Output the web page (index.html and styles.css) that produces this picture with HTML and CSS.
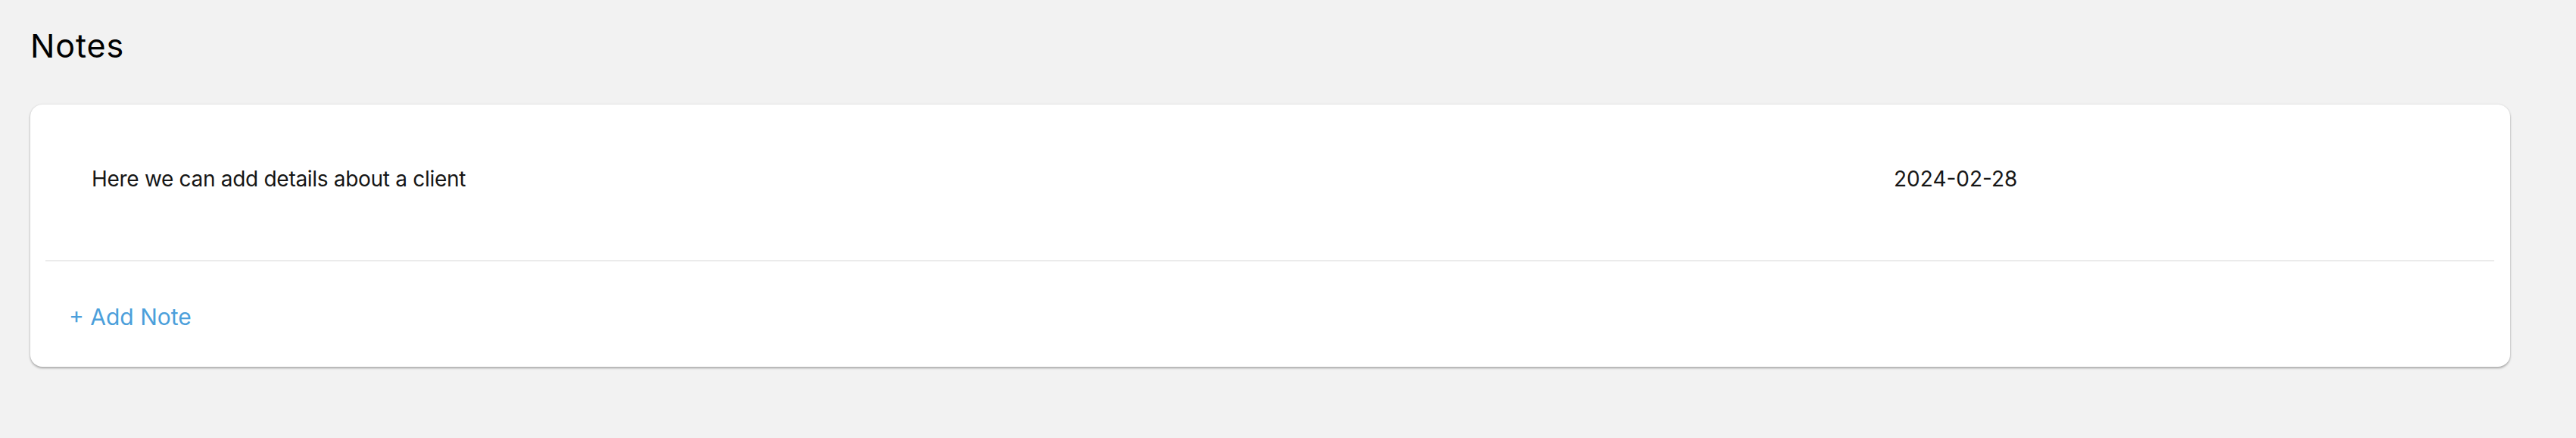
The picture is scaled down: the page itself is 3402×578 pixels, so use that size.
FILE: index.html
```html
<!DOCTYPE html>
<html lang="en">
<head>
<meta charset="utf-8">
<title>Notes</title>
<link rel="stylesheet" href="styles.css">
</head>
<body>
<main class="page">
  <h1 class="page-title">Notes</h1>
  <section class="card">
    <div class="note-row">
      <div class="note-text">Here we can add details about a client</div>
      <div class="note-date">2024-02-28</div>
    </div>
    <div class="card-footer">
      <a class="add-note" href="#">+ Add Note</a>
    </div>
  </section>
</main>
</body>
</html>
```

FILE: styles.css
```css
html, body {
  margin: 0;
  padding: 0;
}

body {
  background: #f2f2f2;
  font-family: Inter, "Noto Sans", "Liberation Sans", sans-serif;
  color: #111;
}

.page {
  padding: 34px 87px 60px 40px;
}

.page-title {
  margin: 0;
  font-size: 43px;
  line-height: 52px;
  font-weight: 400;
  letter-spacing: 0.9px;
  color: #000;
}

.card {
  margin-top: 52px;
  background: #fff;
  border-radius: 16px;
  box-shadow: 0 2px 3px rgba(0, 0, 0, 0.28), 0 0 3px rgba(0, 0, 0, 0.10);
}

.note-row {
  display: grid;
  grid-template-columns: 1fr 732px;
  margin: 0 21px 0 20px;
  padding: 81px 61px 90px 61px;
  border-bottom: 2px solid #ebebeb;
  font-size: 28px;
  line-height: 34px;
  color: #161616;
}

.note-text {
  letter-spacing: -0.3px;
}

.card-footer {
  padding: 55px 51px 48px 51px;
  font-size: 30px;
  line-height: 36px;
}

.add-note {
  color: #4c9fdb;
  text-decoration: none;
}
```
